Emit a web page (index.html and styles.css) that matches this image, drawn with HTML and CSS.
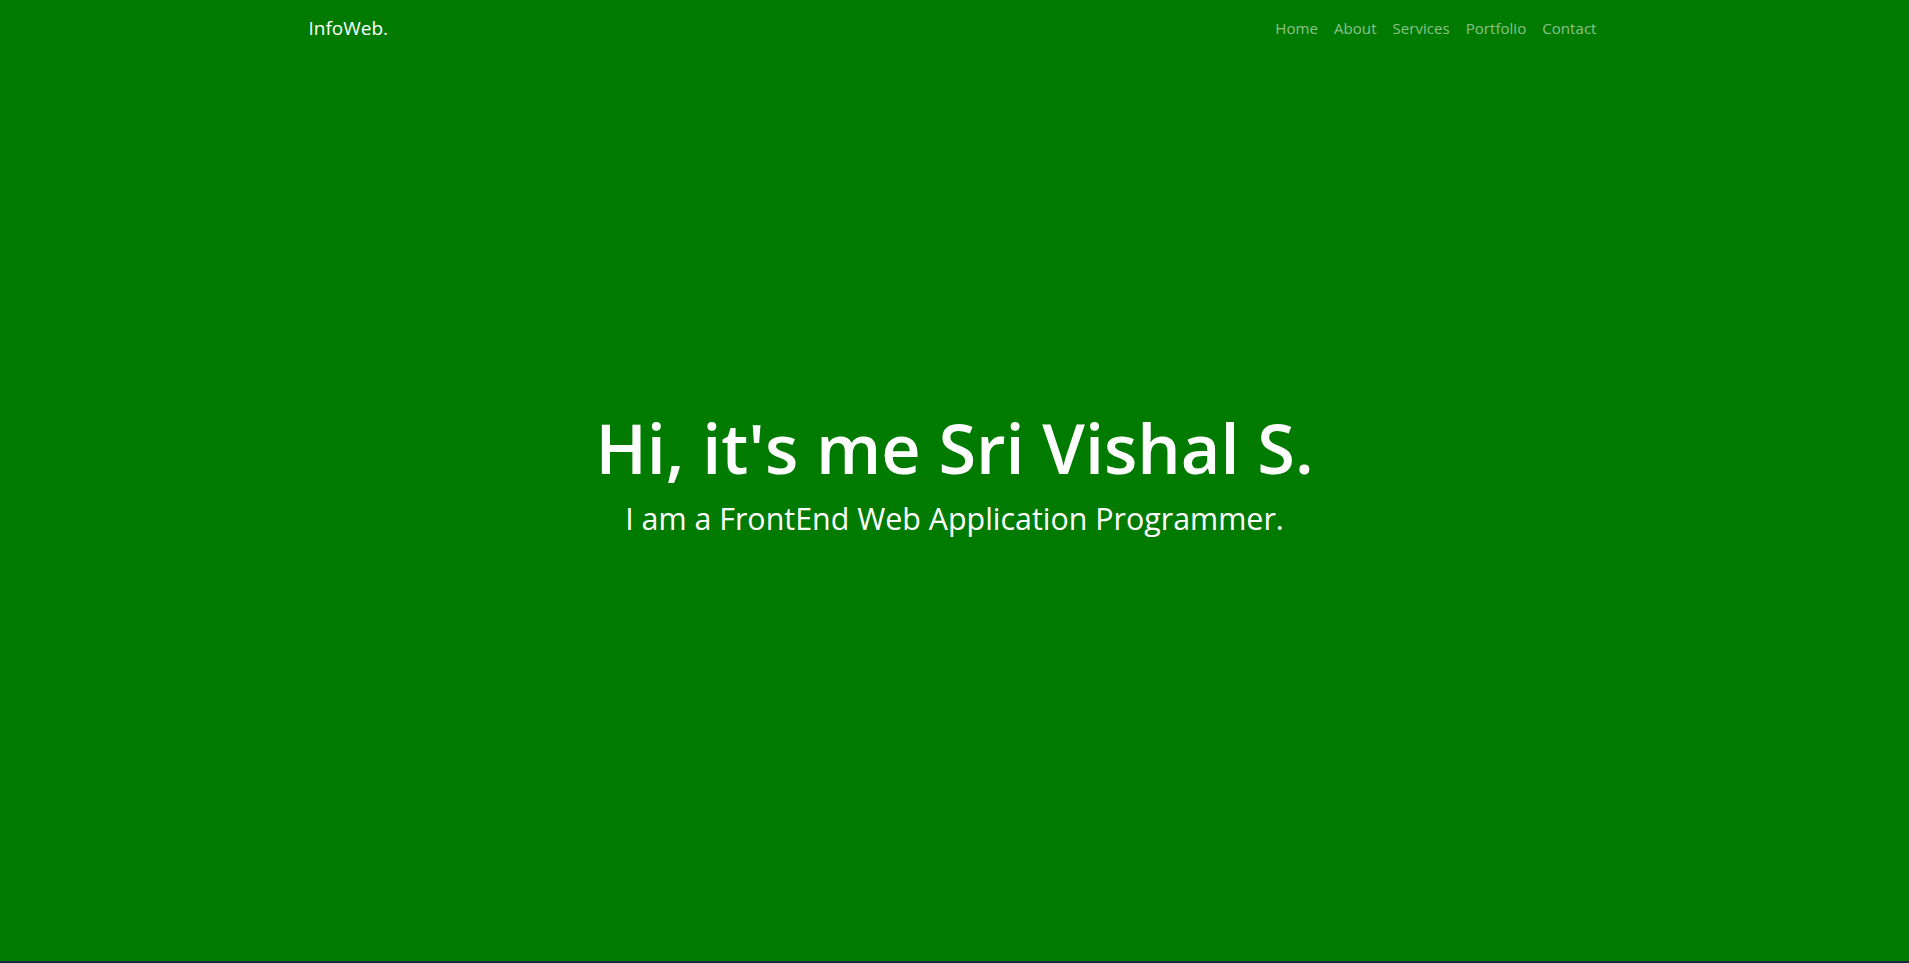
FILE: index.html
```html
<!DOCTYPE html>
<html lang="en">
<head>
<meta charset="utf-8">
<title>InfoWeb.</title>
<link rel="stylesheet" href="styles.css">
</head>
<body>
<div class="page">
  <nav class="navbar">
    <div class="container nav-inner">
      <a class="brand" href="#">InfoWeb.</a>
      <ul class="nav-links">
        <li><a href="#">Home</a></li>
        <li><a href="#">About</a></li>
        <li><a href="#">Services</a></li>
        <li><a href="#">Portfolio</a></li>
        <li><a href="#">Contact</a></li>
      </ul>
    </div>
  </nav>
  <section class="hero">
    <h1 class="hero-title">Hi, it's me Sri Vishal S.</h1>
    <p class="hero-sub">I am a FrontEnd Web Application Programmer.</p>
  </section>
</div>
</body>
</html>
```
FILE: styles.css
```css
* { box-sizing: border-box; }
html, body { margin: 0; padding: 0; }
body {
  background: #1d2740;
  font-family: "Open Sans", "Noto Sans", sans-serif;
  color: #fff;
}
.page {
  position: relative;
}
.navbar {
  position: absolute;
  top: 0;
  left: 0;
  right: 0;
  padding: 8px 0;
}
.container {
  max-width: 1320px;
  margin: 0 auto;
  padding: 0 12px;
}
.nav-inner {
  display: flex;
  align-items: center;
  justify-content: space-between;
}
.brand {
  color: #fff;
  text-decoration: none;
  font-size: 19px;
  line-height: 30px;
  padding: 5px 0;
  margin-left: 2px;
}
.nav-links {
  display: flex;
  list-style: none;
  margin: 0 -2px 0 0;
  padding: 0;
}
.nav-links a {
  display: block;
  padding: 8px 8px;
  color: rgba(255,255,255,0.55);
  text-decoration: none;
  font-size: 15.1px;
  line-height: 24px;
}
.hero {
  height: 961px;
  background: #007b00;
  display: flex;
  flex-direction: column;
  align-items: center;
  justify-content: center;
  text-align: center;
  padding-bottom: 16px;
}
.hero-title {
  margin: 0 0 12px;
  font-size: 68.4px;
  font-weight: 600;
  line-height: 1.2;
}
.hero-sub {
  margin: 0;
  font-size: 30.4px;
  line-height: 1.2;
}
```
